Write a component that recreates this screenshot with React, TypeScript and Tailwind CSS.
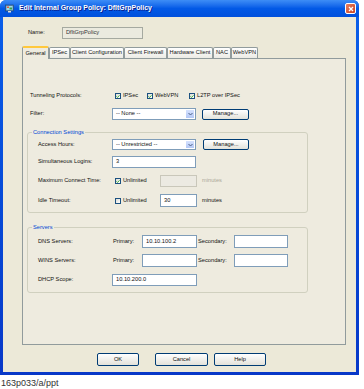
import React from "react";

const font = { fontFamily: "'Liberation Sans', Arial, sans-serif" };

function Check({ on }: { on?: boolean }) {
  return (
    <span className="w-[6px] h-[6px] border border-[#1C5180] bg-linear-to-br from-[#DCDCD6] to-white flex items-center justify-center shrink-0">
      {on && (
        <svg width="5" height="5" viewBox="0 0 5 5">
          <path d="M0.6 2.4 L1.9 3.7 L4.4 1" stroke="#21A121" strokeWidth="1.1" fill="none" />
        </svg>
      )}
    </span>
  );
}

function Box({ w, text, dim }: { w: string; text?: string; dim?: boolean }) {
  return (
    <div
      className={`${w} h-full border flex items-center pl-[3px] ${
        dim ? "bg-[#ECEAE2] border-[#C9C7BA]" : "bg-white border-[#7F9DB9]"
      }`}
    >
      {text}
    </div>
  );
}

function Combo({ text }: { text: string }) {
  return (
    <div className="w-[84px] h-full bg-white border border-[#7F9DB9] flex items-center">
      <span className="flex-1 pl-[3px]">{text}</span>
      <span className="w-[10px] h-full bg-linear-to-b from-[#D6E2FE] to-[#B4C8F6] border border-white flex items-center justify-center">
        <svg width="5" height="4" viewBox="0 0 5 4">
          <path d="M0.5 1 L2.5 3 L4.5 1" stroke="#4D6185" strokeWidth="1" fill="none" />
        </svg>
      </span>
    </div>
  );
}

function Btn({ w, label }: { w: string; label: string }) {
  return (
    <div
      className={`${w} h-full rounded-[2px] border border-[#003C74] bg-linear-to-b from-white to-[#E3E2DA] flex items-center justify-center`}
    >
      {label}
    </div>
  );
}

const tabs = [
  ["General", "w-[27px]"],
  ["IPSec", "w-[21px]"],
  ["Client Configuration", "w-[54px]"],
  ["Client Firewall", "w-[43px]"],
  ["Hardware Client", "w-[46px]"],
  ["NAC", "w-[18px]"],
  ["WebVPN", "w-[27px]"],
] as const;

export default function App() {
  return (
    <div className="w-[364px] h-[389px] bg-white text-[5.7px] leading-none text-[#111]" style={font}>
      <div className="w-[359px] h-[375px] rounded-t-[6px] bg-linear-to-b from-[#0A5FEA] to-[#0838C8] flex flex-col">
        {/* title bar */}
        <div className="h-[17px] rounded-t-[6px] bg-linear-to-b from-[#3D8DF6] via-[#0259E6] to-[#0050DC] flex items-center pl-[5px] pr-[3px]">
          <svg width="9" height="9" viewBox="0 0 9 9" className="shrink-0">
            <rect x="0.5" y="1" width="8" height="6" fill="#5F8FB8" stroke="#23446C" strokeWidth="0.6" />
            <rect x="1.5" y="2" width="6" height="4" fill="#9FD8E8" />
            <rect x="2" y="2.5" width="2" height="1.5" fill="#E85A3A" />
            <rect x="4.5" y="3.5" width="2.5" height="2" fill="#3AA04A" />
            <rect x="3" y="7" width="3" height="1.5" fill="#DCDCDC" />
          </svg>
          <span className="ml-[5px] text-[6.9px] font-bold text-white [text-shadow:1px_1px_0_#0A1E8C]">
            Edit Internal Group Policy: DfltGrpPolicy
          </span>
          <span className="ml-auto w-[11px] h-[11px] rounded-[2px] border border-white bg-linear-to-br from-[#E97E5F] to-[#C8401E] flex items-center justify-center">
            <svg width="6" height="6" viewBox="0 0 6 6">
              <path d="M1 1 L5 5 M5 1 L1 5" stroke="white" strokeWidth="1.3" />
            </svg>
          </span>
        </div>

        {/* body */}
        <div className="mx-[3px] mb-[3px] flex-1 bg-[#ECE9D8] flex flex-col pt-[10px]">
          <div className="h-[12px] flex items-center pl-[25px]">
            <span className="w-[34px]">Name:</span>
            <div className="w-[81px] h-full bg-[#EBEADF] border border-[#A5A9A0] flex items-center pl-[3px] text-[#333]">
              DfltGrpPolicy
            </div>
          </div>

          {/* tabs */}
          <div className="mt-[8px] ml-[19px] h-[11px] flex items-end">
            {tabs.map(([t, w], i) =>
              i === 0 ? (
                <div
                  key={t}
                  className={`${w} h-[13px] -mb-px relative z-10 bg-[#EEEBDF] border-x border-[#919B9C] border-t-2 border-t-[#FFC83C] rounded-t-[2px] flex items-center justify-center`}
                >
                  {t}
                </div>
              ) : (
                <div
                  key={t}
                  className={`${w} h-[11px] bg-linear-to-b from-white to-[#ECEBE5] border border-b-0 border-[#919B9C] rounded-t-[2px] flex items-center justify-center`}
                >
                  {t}
                </div>
              )
            )}
          </div>

          {/* panel */}
          <div className="ml-[19px] w-[324px] h-[287px] border border-[#919B9C] bg-[#EEEBDF] flex flex-col">
            <div className="mt-[32px] h-[10px] flex items-center pl-[7px]">
              <span className="w-[82px]">Tunneling Protocols:</span>
              <div className="w-[32px] ml-[3px] flex items-center gap-[2px]">
                <Check on />
                IPSec
              </div>
              <div className="w-[42px] flex items-center gap-[2px]">
                <Check on />
                WebVPN
              </div>
              <div className="flex items-center gap-[2px]">
                <Check on />
                L2TP over IPSec
              </div>
            </div>

            <div className="mt-[7px] h-[12px] flex items-center pl-[7px]">
              <span className="w-[82px]">Filter:</span>
              <Combo text="-- None --" />
              <div className="ml-[6px] h-[11px]">
                <Btn w="w-[47px]" label="Manage..." />
              </div>
            </div>

            <fieldset className="mt-[8px] ml-[4px] w-[281px] border border-[#D0D0BF] rounded-[3px] pb-[5px]">
              <legend className="ml-[4px] px-[1px] h-[8px] leading-[8px] text-[#0046D5]">
                Connection Settings
              </legend>
              <div className="mt-[3px] h-[11px] flex items-center pl-[10px]">
                <span className="w-[74px]">Access Hours:</span>
                <Combo text="-- Unrestricted --" />
                <div className="ml-[7px] h-full">
                  <Btn w="w-[46px]" label="Manage..." />
                </div>
              </div>
              <div className="mt-[6px] h-[12px] flex items-center pl-[10px]">
                <span className="w-[74px]">Simultaneous Logins:</span>
                <Box w="w-[84px]" text="3" />
              </div>
              <div className="mt-[7px] h-[12px] flex items-center pl-[10px]">
                <span className="w-[74px]">Maximum Connect Time:</span>
                <div className="w-[45px] ml-[3px] flex items-center gap-[2px]">
                  <Check on />
                  Unlimited
                </div>
                <Box w="w-[37px]" dim />
                <span className="ml-[5px] text-[#ACA899]">minutes</span>
              </div>
              <div className="mt-[7px] h-[13px] flex items-center pl-[10px]">
                <span className="w-[74px]">Idle Timeout:</span>
                <div className="w-[45px] ml-[3px] flex items-center gap-[2px]">
                  <Check />
                  Unlimited
                </div>
                <Box w="w-[37px]" text="30" />
                <span className="ml-[5px]">minutes</span>
              </div>
            </fieldset>

            <fieldset className="mt-[10px] ml-[4px] w-[281px] border border-[#D0D0BF] rounded-[3px] pb-[6px]">
              <legend className="ml-[4px] px-[1px] h-[8px] leading-[8px] text-[#0046D5]">Servers</legend>
              <div className="mt-[4px] h-[13px] flex items-center pl-[10px]">
                <span className="w-[74px]">DNS Servers:</span>
                <span className="ml-[1px] w-[29px]">Primary:</span>
                <Box w="w-[55px]" text="10.10.100.2" />
                <span className="ml-[1px] w-[36px]">Secondary:</span>
                <Box w="w-[54px]" />
              </div>
              <div className="mt-[6px] h-[13px] flex items-center pl-[10px]">
                <span className="w-[74px]">WINS Servers:</span>
                <span className="ml-[1px] w-[29px]">Primary:</span>
                <Box w="w-[55px]" />
                <span className="ml-[1px] w-[36px]">Secondary:</span>
                <Box w="w-[54px]" />
              </div>
              <div className="mt-[7px] h-[12px] flex items-center pl-[10px]">
                <span className="w-[74px]">DHCP Scope:</span>
                <Box w="w-[85px]" text="10.10.200.0" />
              </div>
            </fieldset>
          </div>

          <div className="mt-[8px] h-[13px] flex pl-[94px]">
            <Btn w="w-[42px]" label="OK" />
            <div className="ml-[16px] h-full">
              <Btn w="w-[53px]" label="Cancel" />
            </div>
            <div className="ml-[6px] h-full">
              <Btn w="w-[52px]" label="Help" />
            </div>
          </div>
        </div>
      </div>
      <div className="mt-[3px] pl-[1px] text-[9px] leading-[11px] text-[#333]">163p033/a/ppt</div>
    </div>
  );
}
